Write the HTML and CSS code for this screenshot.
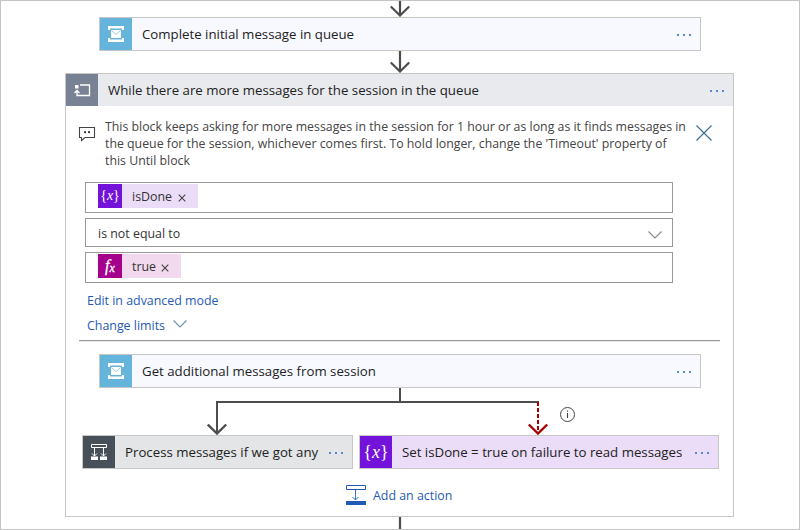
FILE: index.html
```
<!DOCTYPE html>
<html lang="en">
<head>
<meta charset="utf-8">
<title>Logic app designer</title>
<link rel="stylesheet" href="styles.css">
</head>
<body>
<svg class="defs" width="0" height="0">
  <symbol id="bus" viewBox="0 0 32 32">
    <path d="M8 8h16v4h-2v-1.500H10V12H8zM8 24h16v-4h-2v1.500H10V20H8z" fill="#fff"/>
    <rect x="11" y="12" width="10" height="8" fill="#fff"/>
    <path d="M11.500 12.500l4.500 4 4.500-4" fill="none" stroke="#8fc5e2" stroke-width=".9"/>
  </symbol>
  <symbol id="dots" viewBox="0 0 14 2">
    <path d="M0 0h2v2H0zM6 0h2v2H6zM12 0h2v2h-2z" fill="#5b88cc"/>
  </symbol>
</svg>
<main class="canvas">
  <svg class="connector" width="20" height="16" viewBox="0 0 20 16"><path d="M10 0v14M.8 5.500l9.200 9 9.200-9"/></svg>
  <section class="card wide blue">
    <svg class="tile" viewBox="0 0 32 32"><use href="#bus"/></svg>
    <span class="label">Complete initial message in queue</span>
    <svg class="dots"><use href="#dots"/></svg>
  </section>
  <svg class="connector" width="20" height="22" viewBox="0 0 20 22"><path d="M10 0v20M.8 11.500l9.200 9 9.200-9"/></svg>

  <section class="scope">
    <header class="scope-head">
      <svg class="tile slate" viewBox="0 0 32 32"><path d="M14 11h9.500v10.500H11v-4M8.500 19l2.500-2.500 2.500 2.500" fill="none" stroke="#fff" stroke-width="1.300"/><path d="M9 11h3.500v3.500H9z" fill="#fff"/></svg>
      <span class="label">While there are more messages for the session in the queue</span>
      <svg class="dots"><use href="#dots"/></svg>
    </header>
    <div class="comment">
      <svg class="bubble" width="18" height="16" viewBox="0 0 18 16"><path d="M1.500 1.500h15v10H7L3.500 14.500v-3h-2z" fill="none" stroke="#444" stroke-width="1.100"/><path d="M6 5.300h2v1.500l-1 1V7H6zM10 5.300h2v1.500l-1 1V7h-1z" fill="#333"/></svg>
      <p>This block keeps asking for more messages in the session for 1 hour or as long as it finds messages in<br>the queue for the session, whichever comes first. To hold longer, change the 'Timeout' property of<br>this Until block</p>
      <svg class="close" width="16" height="16" viewBox="0 0 16 16"><path d="M.5.500l15 15M15.500.500l-15 15" fill="none" stroke="#3f6f96" stroke-width="1.200"/></svg>
    </div>
    <div class="fields">
      <div class="field">
        <span class="token violet"><i class="sym"><b>{</b>x<b>}</b></i><span>isDone</span><svg width="8" height="8" viewBox="0 0 8 8"><path d="M.7.700l6.600 6.600M7.300.700L.7 7.300"/></svg></span>
      </div>
      <div class="field select"><span>is not equal to</span><svg width="14" height="8" viewBox="0 0 14 8"><path d="M.5.500L7 7 13.500.500" fill="none" stroke="#8a8a8a" stroke-width="1.200"/></svg></div>
      <div class="field">
        <span class="token magenta"><i class="sym fx">f<small>x</small></i><span>true</span><svg width="8" height="8" viewBox="0 0 8 8"><path d="M.7.700l6.600 6.600M7.300.700L.7 7.300"/></svg></span>
      </div>
    </div>
    <a class="link first"><span>Edit in advanced mode</span></a>
    <a class="link limits"><span>Change limits</span><svg width="14" height="8" viewBox="0 0 14 8"><path d="M.5.500L7 7 13.500.500" fill="none" stroke="#6d92b5" stroke-width="1.200"/></svg></a>
    <hr>
    <section class="card wide blue">
      <svg class="tile" viewBox="0 0 32 32"><use href="#bus"/></svg>
      <span class="label">Get additional messages from session</span>
      <svg class="dots"><use href="#dots"/></svg>
    </section>
    <div class="fork">
      <svg width="390" height="47" viewBox="0 0 390 47" fill="none" stroke-width="2">
        <path d="M193 0v14M332 14H10v31" stroke="#4d4d4d"/>
        <path d="M.8 36.500l9.200 9 9.200-9" stroke="#4d4d4d" stroke-width="2.400"/>
        <path d="M331 14v31" stroke="#a80000" stroke-dasharray="4 2"/>
        <path d="M321.800 36.500l9.200 9 9.200-9" stroke="#a80000" stroke-width="2.400"/>
        <circle cx="360.500" cy="26.500" r="7" stroke="#444" stroke-width="1"/>
        <path d="M360.500 25v5M360.500 22.500v1.300" stroke="#444" stroke-width="1.100"/>
      </svg>
    </div>
    <div class="branches">
      <section class="card gray">
        <svg class="tile dark" viewBox="0 0 32 32"><path d="M8.500 8.500h15v3h-15zM11.500 12v8M20.500 12v8M9 17.500l2.500 2.500 2.500-2.500M18 17.500l2.500 2.500 2.500-2.500" fill="none" stroke="#fff" stroke-width="1"/><path d="M8 20.500h7V24H8zM17 20.500h7V24h-7z" fill="#fff"/></svg>
        <span class="label">Process messages if we got any</span>
        <svg class="dots"><use href="#dots"/></svg>
      </section>
      <section class="card lilac">
        <i class="tile sym big"><b>{</b>x<b>}</b></i>
        <span class="label">Set isDone = true on failure to read messages</span>
        <svg class="dots"><use href="#dots"/></svg>
      </section>
    </div>
    <a class="add"><svg width="20" height="20" viewBox="0 0 20 20"><path d="M.5.500h19v4H.5z" fill="none" stroke="#1f5bb5"/><path d="M9.500 5v10M6.500 12l3 3 3-3" fill="none" stroke="#3d74c4"/><path d="M0 16h20v4H0z" fill="#1f5bb5"/></svg><span>Add an action</span></a>
  </section>
  <svg class="connector" width="20" height="12" viewBox="0 0 20 12"><path d="M10 0v12"/></svg>
</main>
</body>
</html>
```
FILE: styles.css
```
* { box-sizing: border-box; }
body { margin: 0; font-family: "Open Sans", "Noto Sans", sans-serif; font-size: 12.4px; color: #222; background: #fff; }
.defs { position: absolute; }
svg { display: block; flex: none; }
.canvas { width: 800px; height: 530px; border: 1px solid #c4c4c4; display: flex; flex-direction: column; align-items: center; }
.connector { fill: none; stroke: #4d4d4d; stroke-width: 2.200; }
.card { height: 34px; border: 1px solid #c6c6c6; display: flex; align-items: center; }
.wide { width: 602px; }
.blue { background: #f8f9ff; }
.tile { width: 32px; height: 32px; flex: none; background: #65b4db; }
.slate { background: #788294; }
.dark { background: #474f59; }
.label { flex: 1; margin-left: 10px; white-space: nowrap; font-size: 13.26px; line-height: 20px; }
.dots { width: 14px; height: 2px; margin-right: 9px; margin-top: 1px; }
.scope { width: 669px; height: 444px; border: 1px solid #c6c6c6; margin-right: 1px; }
.scope-head { height: 32px; background: #e9eaee; display: flex; align-items: center; }
.comment { height: 76px; display: flex; padding: 12px 21px 0 12px; color: #444; }
.comment p { margin: 0 0 0 9px; flex: 1; line-height: 17px; font-size: 12.34px; white-space: nowrap; }
.bubble { margin-top: 8px; }
.close { margin-top: 7px; }
.fields { width: 588px; margin-left: 19px; display: flex; flex-direction: column; gap: 5px; }
.field { height: 31px; border: 1px solid #999; padding: 1px 12px; display: flex; color: #333; }
.select { height: 29px; align-items: center; justify-content: space-between; padding: 0 10px 0 12px; }
.select span { margin-top: 2px; }
.select svg { margin-top: 4px; }
.token { height: 24px; display: flex; align-items: center; line-height: 24px; }
.token > span { margin: 2px 0 0 10px; flex: 1; white-space: nowrap; }
.token svg { margin: 4px 12px 0 0; fill: none; stroke: #444; stroke-width: 1.100; }
.violet { width: 100px; background: #ebdcf8; }
.magenta { width: 83px; background: #f2d9ed; }
.sym { width: 24px; height: 24px; flex: none; background: #7312d8; color: #fff; display: flex; align-items: center; justify-content: center; font: italic 14px/22px "Liberation Serif", serif; }
.sym b { font-style: normal; font-weight: 400; }
.sym.fx { background: #a4008c; font-size: 16px; -webkit-text-stroke: .3px #fff; }
.fx small { font-size: 12px; margin-top: 4px; }
.sym.big { width: 32px; height: 32px; font-size: 18px; line-height: 28px; }
.link, .add { color: #1f5bb5; display: flex; align-items: center; white-space: nowrap; }
.link { margin-left: 21px; height: 25px; }
.first { margin-top: 5px; }
.limits svg { margin: -3px 0 0 8px; }
hr { margin: 2px 13px 0; height: 2px; border: 0; background: linear-gradient(#999 50%, #e8e8e8 50%); }
.scope > .wide { margin: 12px 0 0 33px; }
.fork { height: 47px; margin-left: 141px; }
.branches { display: flex; gap: 6px; margin-left: 16px; }
.gray { width: 271px; background: #e3e5e6; }
.gray .dots { margin-right: 9px; }
.lilac { width: 360px; background: #ebdcf8; }
.add { margin: 16px 0 0 280px; height: 20px; gap: 7px; }
```
